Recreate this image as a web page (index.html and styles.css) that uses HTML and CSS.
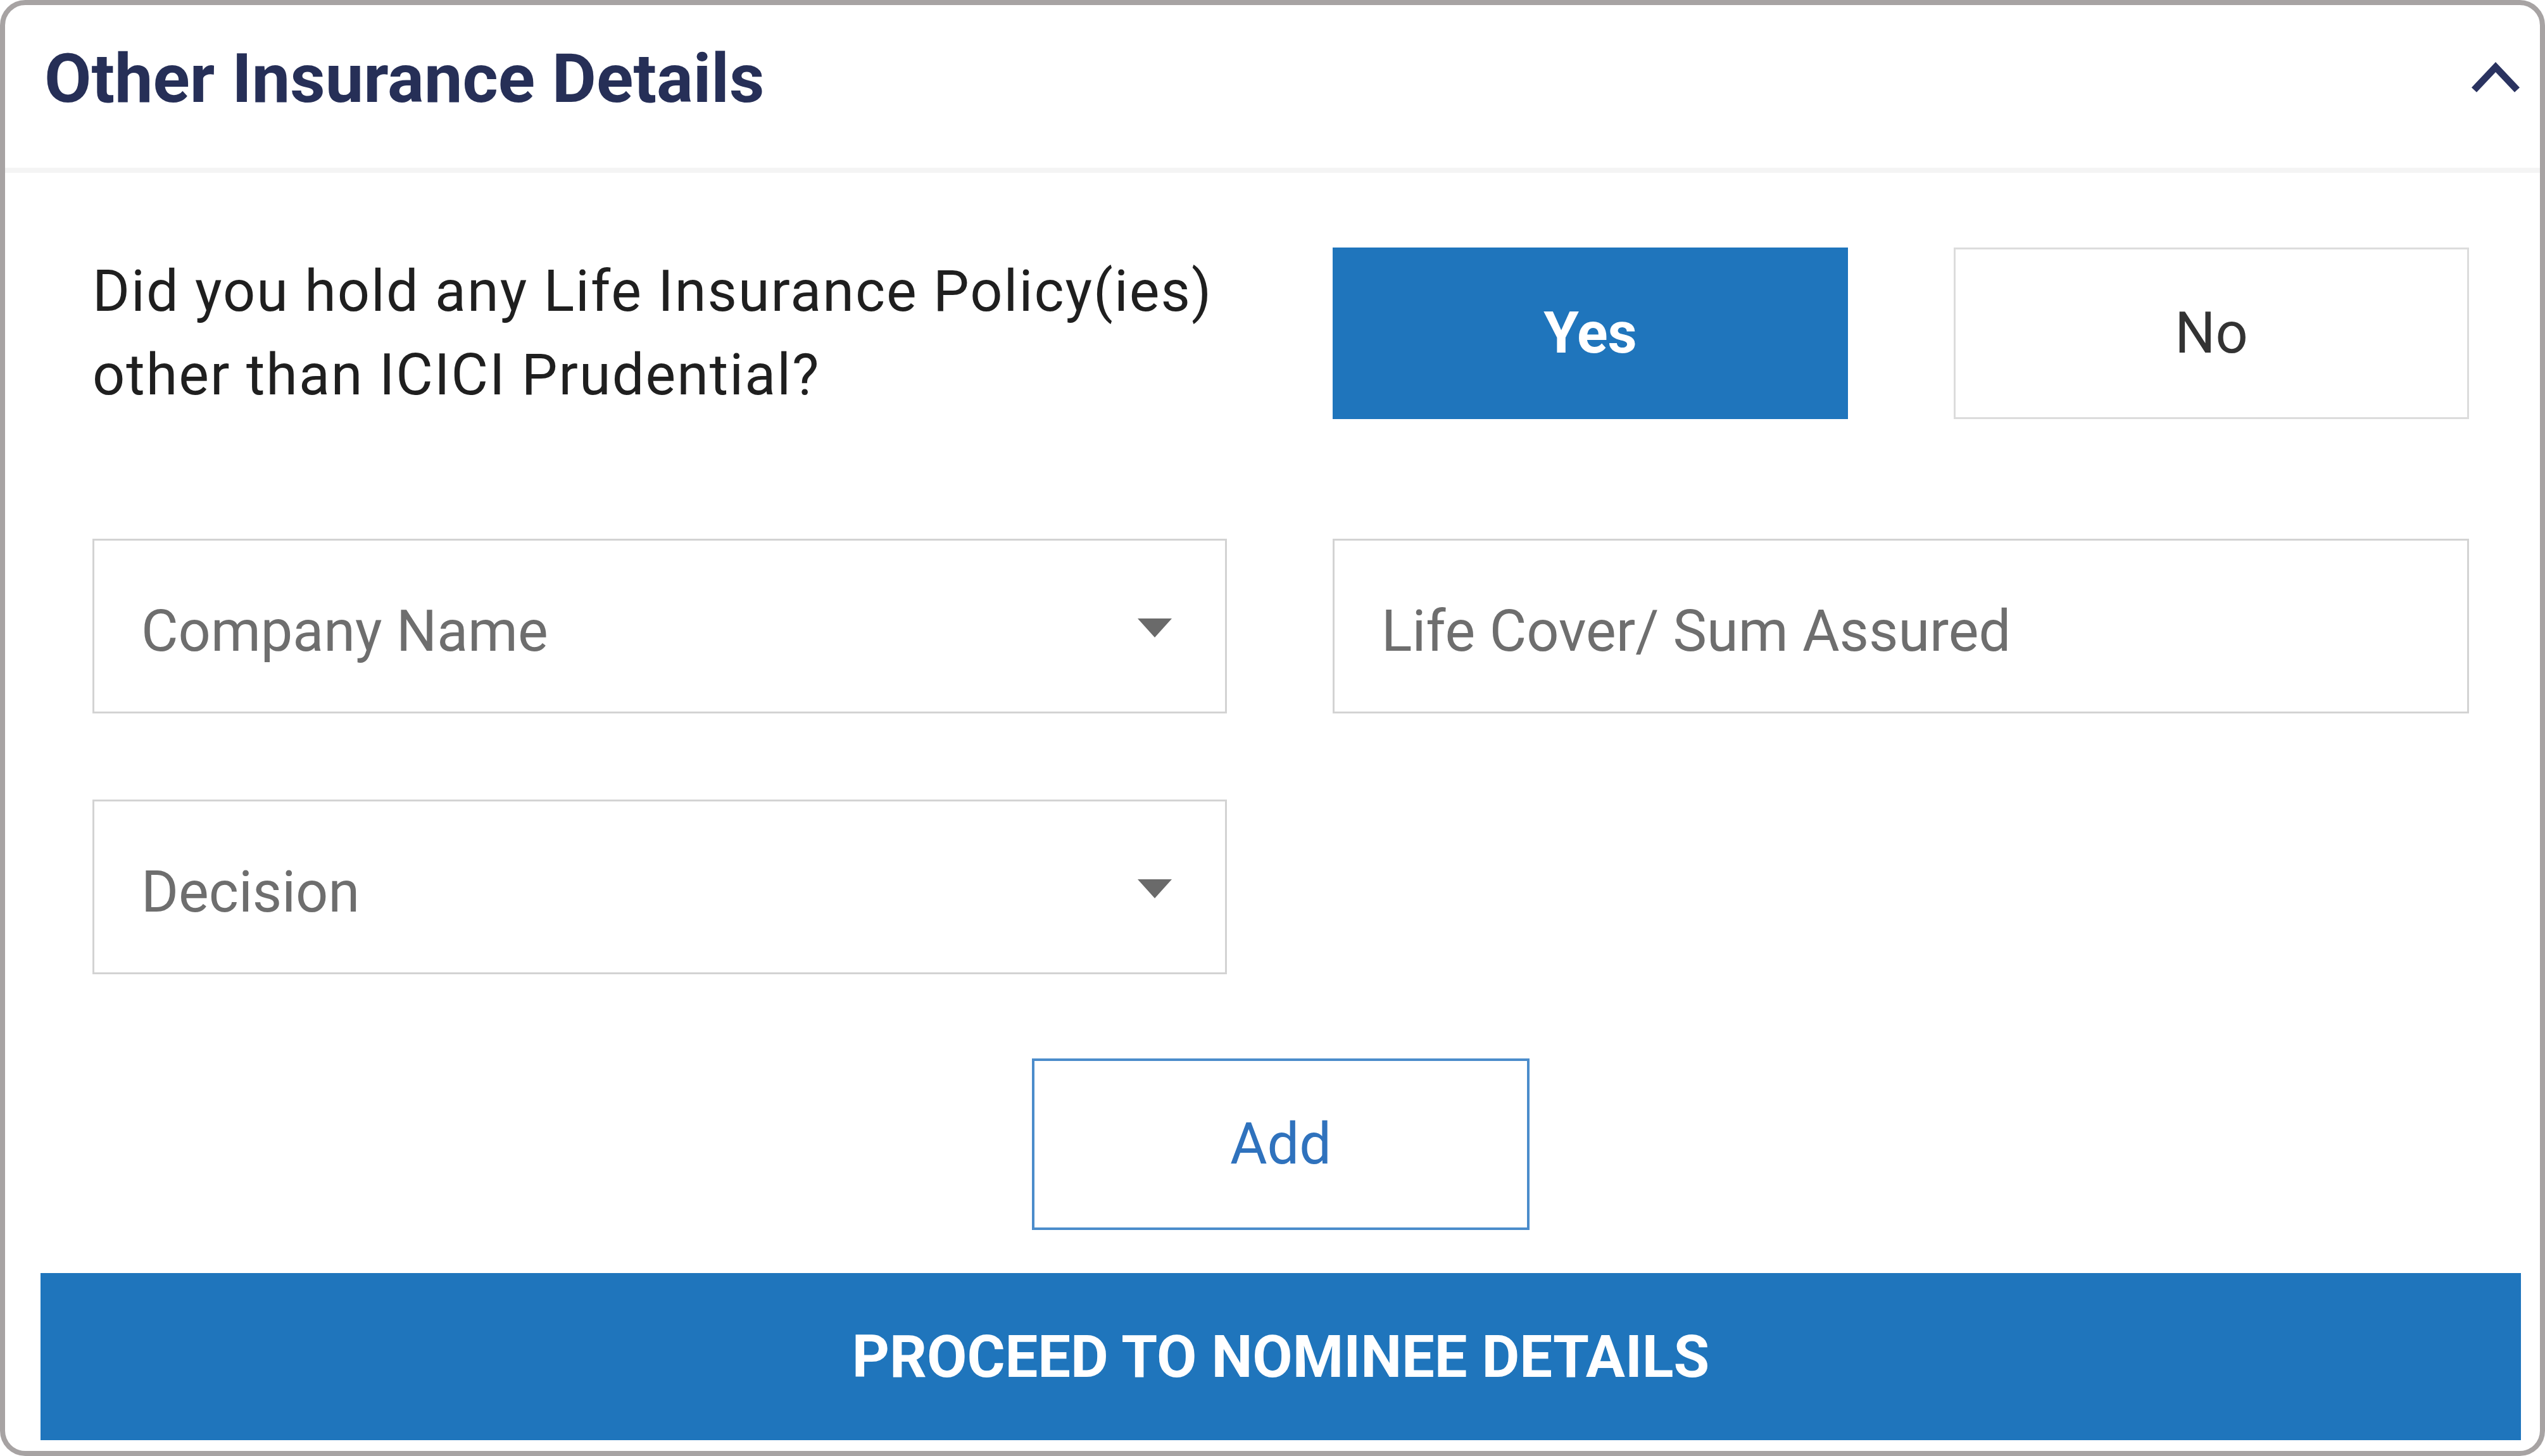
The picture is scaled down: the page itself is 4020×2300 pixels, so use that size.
FILE: index.html
```html
<!DOCTYPE html>
<html lang="en">
<head>
  <meta charset="UTF-8">
  <meta name="viewport" content="width=device-width, initial-scale=1.0">
  <title>Other Insurance Details</title>
  <link rel="stylesheet" href="styles.css">
</head>
<body>

  <div class="card">

    <!-- Header -->
    <div class="card-head">
      <h1>Other Insurance Details</h1>
      <svg class="chevron" width="80" height="50" viewBox="0 0 80 50">
        <polyline points="6,44 40,8 74,44" fill="none" stroke="#2a3360" stroke-width="11" stroke-linejoin="miter"/>
      </svg>
    </div>

    <div class="card-body">

      <!-- Question with Yes / No -->
      <div class="row">
        <p class="question">Did you hold any Life Insurance Policy(ies) other than ICICI Prudential?</p>
        <div class="options">
          <button class="option active">Yes</button>
          <button class="option">No</button>
        </div>
      </div>

      <!-- Fields -->
      <div class="row fields">
        <div class="field select">
          <span>Company Name</span>
          <svg width="54" height="30" viewBox="0 0 54 30"><polygon points="0,0 54,0 27,30" fill="#6a6a6a"/></svg>
        </div>
        <div class="field">
          <span>Life Cover/ Sum Assured</span>
        </div>
      </div>

      <div class="row fields second">
        <div class="field select">
          <span>Decision</span>
          <svg width="54" height="30" viewBox="0 0 54 30"><polygon points="0,0 54,0 27,30" fill="#6a6a6a"/></svg>
        </div>
      </div>

      <div class="add-wrap">
        <button class="add-btn">Add</button>
      </div>

    </div>

    <div class="card-foot">
      <button class="proceed">PROCEED TO NOMINEE DETAILS</button>
    </div>

  </div>

</body>
</html>
```

FILE: styles.css
```css
* {
  margin: 0;
  padding: 0;
  box-sizing: border-box;
  font-family: 'Roboto', 'Liberation Sans', sans-serif;
}

body {
  background: #fff;
  width: 4020px;
  height: 2300px;
}

.card {
  width: 4020px;
  height: 2300px;
  border: 8px solid #a7a3a3;
  border-radius: 40px;
  background: #fff;
  display: flex;
  flex-direction: column;
}

/* Header */
.card-head {
  height: 265px;
  padding: 0 30px 0 62px;
  border-bottom: 8px solid #f4f4f4;
  display: flex;
  align-items: center;
  justify-content: space-between;
}

.card-head h1 {
  font-size: 108px;
  font-weight: 700;
  color: #262f57;
  margin-top: -26px;
}

.chevron {
  margin-top: -28px;
}

/* Body */
.card-body {
  padding: 118px 112px 0 138px;
}

.row {
  display: grid;
  grid-template-columns: 1792px 1fr;
  column-gap: 167px;
  align-items: center;
}

.question {
  font-size: 90px;
  line-height: 132px;
  letter-spacing: 2px;
  color: #1f1f1f;
}

.options {
  display: grid;
  grid-template-columns: 1fr 1fr;
  column-gap: 167px;
}

.option {
  height: 271px;
  font-size: 90px;
  background: #fff;
  color: #333;
  border: 3px solid #dcdcdc;
}

.option.active {
  background: #1f75bc;
  border-color: #1f75bc;
  color: #fff;
  font-weight: 700;
}

.fields {
  margin-top: 189px;
}

.fields.second {
  margin-top: 136px;
}

.field {
  height: 276px;
  border: 3px solid #d3d3d3;
  padding: 16px 84px 0 74px;
  display: flex;
  align-items: center;
  justify-content: space-between;
  font-size: 90px;
  color: #6e6e6e;
}

.field svg {
  margin-top: -10px;
}

.add-wrap {
  margin-top: 133px;
  display: flex;
  justify-content: center;
}

.add-btn {
  width: 786px;
  height: 271px;
  background: #fff;
  border: 4px solid #4b8ccb;
  color: #2f72bd;
  font-size: 90px;
}

/* Footer */
.card-foot {
  padding: 68px 30px 0 56px;
}

.proceed {
  width: 100%;
  height: 264px;
  background: #1f75bc;
  border: none;
  color: #fff;
  font-size: 92px;
  font-weight: 700;
}
```
